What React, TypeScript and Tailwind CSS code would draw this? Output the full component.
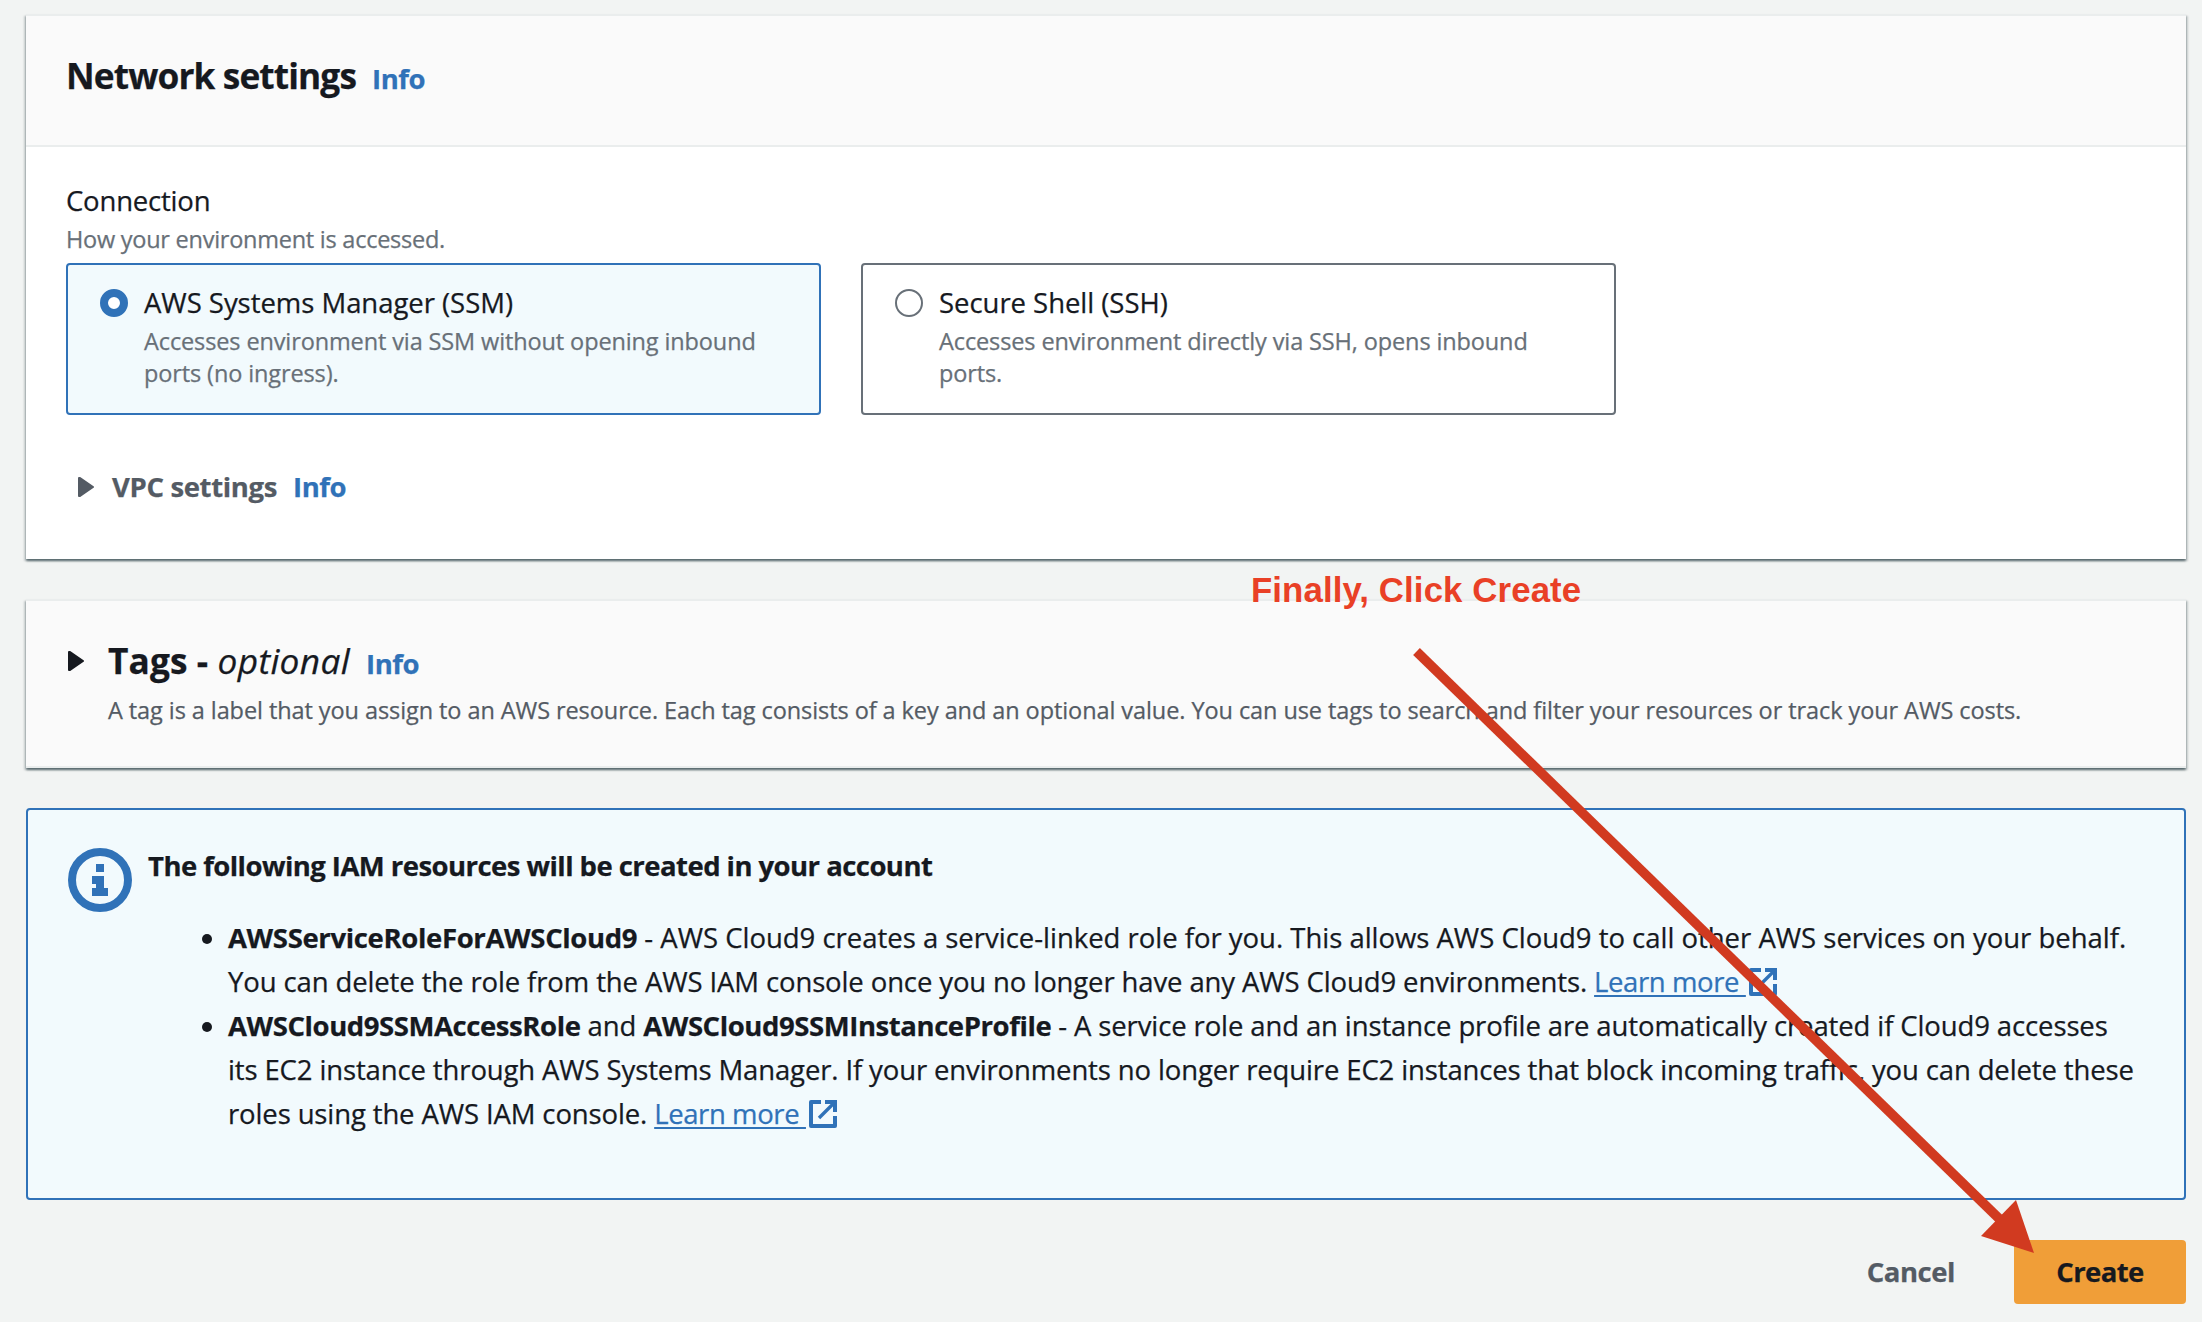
import type { ReactNode } from "react";

function Caret({ className }: { className: string }) {
  return (
    <svg viewBox="0 0 16 20" className={`h-5 w-4 shrink-0 ${className}`} fill="currentColor" stroke="currentColor" strokeWidth="2" strokeLinejoin="round">
      <path d="M1 1L2 1L15 10L2 19L1 19Z" />
    </svg>
  );
}

function InfoIcon() {
  return (
    <svg viewBox="0 0 16 16" className="h-16 w-16 shrink-0 text-[#3072b8]">
      <circle cx="8" cy="8" r="7" fill="none" stroke="currentColor" strokeWidth="2" />
      <path d="M7 4h2v2H7zM6 7h3v3h1v2H6v-2h1V9H6z" fill="currentColor" />
    </svg>
  );
}

function ExternalIcon() {
  return (
    <svg viewBox="0 0 28 28" className="ml-[3px] inline-block h-7 w-7 align-[-4px] text-[#3072b8]" fill="none" stroke="currentColor">
      <path d="M12 2H2v24h24V16" strokeWidth="4" strokeLinejoin="round" />
      <path d="M16 2h10v10" strokeWidth="4" />
      <path d="M25 3L10 18" strokeWidth="3.4" />
    </svg>
  );
}

function InfoLink({ className }: { className: string }) {
  return <a className={`text-[27.5px] font-bold tracking-[-0.45px] text-[#3072b8] ${className}`}>Info</a>;
}

function LearnMore() {
  return (
    <a className="text-[#3072b8]">
      <span className="tracking-[-0.4px] whitespace-pre underline decoration-2 underline-offset-[3px]">Learn more </span>
      <ExternalIcon />
    </a>
  );
}

const cardShadow =
  "shadow-[0_2px_2px_0_rgba(0,28,36,0.5),2px_2px_2px_0_rgba(0,28,36,0.15),-2px_2px_2px_0_rgba(0,28,36,0.15)]";

function Tile({ selected, title, children }: { selected?: boolean; title: string; children: ReactNode }) {
  return (
    <div
      className={`flex h-[152px] w-[755px] gap-4 rounded-[4px] border-2 pt-4 pl-8 ${
        selected ? "border-[#3072b8] bg-[#f2fafd]" : "border-[#687078] bg-white"
      }`}
    >
      <span
        className={`mt-2 h-7 w-7 shrink-0 rounded-full bg-white ${
          selected ? "border-8 border-[#3072b8]" : "border-2 border-[#687078]"
        }`}
      />
      <div className="whitespace-nowrap">
        <div className="text-[27.5px] leading-[44px] tracking-[-0.04px]">{title}</div>
        <div className="text-[23.5px] leading-8 tracking-[-0.12px] text-[#687078]">{children}</div>
      </div>
    </div>
  );
}

export default function App() {
  return (
    <div className="relative h-[1322px] w-[2202px] overflow-hidden bg-[#f2f4f3] pt-[14px] pr-4 pl-[26px] font-['Open_Sans','Noto_Sans',sans-serif] text-[#16191f] [-webkit-text-stroke:0.25px]">
      <section className={`h-[545px] border-t-2 border-[#eaeded] bg-white ${cardShadow}`}>
        <header className="h-[131px] border-b-2 border-[#eaeded] bg-[#fafafa] pt-[37px] pl-10">
          <div className="flex items-baseline leading-[44px]">
            <h2 className="text-[35.25px] font-bold tracking-[-0.88px]">Network settings</h2>
            <InfoLink className="ml-4" />
          </div>
        </header>
        <div className="pt-8 pl-10">
          <div className="text-[27.5px] leading-[44px] tracking-[-0.2px]">Connection</div>
          <div className="text-[23.5px] leading-8 tracking-[-0.25px] text-[#687078]">How your environment is accessed.</div>
          <div className="mt-2 flex gap-10">
            <Tile selected title="AWS Systems Manager (SSM)">
              Accesses environment via SSM without opening inbound
              <br />
              ports (no ingress).
            </Tile>
            <Tile title="Secure Shell (SSH)">
              Accesses environment directly via SSH, opens inbound
              <br />
              ports.
            </Tile>
          </div>
          <div className="mt-[50px] flex items-center pl-3 leading-[44px]">
            <Caret className="text-[#545b64]" />
            <span className="ml-[18px] text-[27.5px] font-bold tracking-[-0.35px] text-[#545b64]">VPC settings</span>
            <InfoLink className="ml-4" />
          </div>
        </div>
      </section>

      <section className={`mt-10 flex h-[169px] border-y-2 border-[#eaeded] bg-[#fafafa] pt-[37px] pl-[42px] ${cardShadow}`}>
        <Caret className="mt-[13px]" />
        <div className="ml-6">
          <div className="flex items-baseline leading-[44px]">
            <h2 className="text-[35.25px] font-bold tracking-[0.1px] whitespace-pre">Tags - </h2>
            <i className="text-[35.25px] tracking-[0.35px]">optional</i>
            <InfoLink className="ml-4" />
          </div>
          <p className="mt-2 text-[23.5px] leading-8 tracking-[-0.08px] whitespace-nowrap text-[#545b64]">
            A tag is a label that you assign to an AWS resource. Each tag consists of a key and an optional value. You can use tags to search and filter your resources or track your AWS costs.
          </p>
        </div>
      </section>

      <section className="mt-10 flex h-[392px] rounded-[4px] border-2 border-[#3072b8] bg-[#f2fafd] pl-10">
        <div className="pt-[38px]">
          <InfoIcon />
        </div>
        <div className="ml-4 pt-[34px] text-[27.5px] leading-[44px]">
          <h3 className="font-bold tracking-[-0.55px]">The following IAM resources will be created in your account</h3>
          <ul className="mt-7 whitespace-nowrap">
            <li className="flex pl-[54px]">
              <span className="mt-[18px] mr-4 h-[10px] w-[10px] shrink-0 rounded-full bg-[#16191f]" />
              <div className="h-[88px] tracking-[-0.02px]">
                <b className="font-bold tracking-[-0.35px]">AWSServiceRoleForAWSCloud9</b> - AWS Cloud9 creates a service-linked role for you. This allows AWS Cloud9 to call other AWS services on your behalf.
                <br />
                <span className="tracking-[-0.12px]">
                  You can delete the role from the AWS IAM console once you no longer have any AWS Cloud9 environments. <LearnMore />
                </span>
              </div>
            </li>
            <li className="flex pl-[54px]">
              <span className="mt-[18px] mr-4 h-[10px] w-[10px] shrink-0 rounded-full bg-[#16191f]" />
              <div className="h-[132px] tracking-[-0.13px]">
                <span className="tracking-[-0.12px]">
                  <b className="font-bold tracking-[-0.42px]">AWSCloud9SSMAccessRole</b> and <b className="font-bold tracking-[-0.42px]">AWSCloud9SSMInstanceProfile</b> - A service role and an instance profile are automatically created if Cloud9 accesses
                </span>
                <br />
                its EC2 instance through AWS Systems Manager. If your environments no longer require EC2 instances that block incoming traffic, you can delete these
                <br />
                roles using the AWS IAM console. <LearnMore />
              </div>
            </li>
          </ul>
        </div>
      </section>

      <footer className="mt-10 flex justify-end text-[27.5px] leading-[64px] font-bold">
        <button className="mr-[59px] tracking-[-0.45px] text-[#545b64]">Cancel</button>
        <button className="h-16 w-[172px] rounded-[4px] bg-[#f09e38] tracking-[-0.6px]">Create</button>
      </footer>

      <div className="absolute top-[570px] left-[1251px] font-['Liberation_Sans',sans-serif] text-[34.8px] leading-10 font-bold tracking-[0.1px] whitespace-nowrap text-[#e94026] [-webkit-text-stroke:0]">
        Finally, Click Create
      </div>
      <svg className="absolute top-0 left-0 h-[1322px] w-[2202px]" viewBox="0 0 2202 1322">
        <path d="M1416.5 651.5L2000 1219.5" stroke="#d13a20" strokeWidth="9.6" />
        <path d="M2034 1253L1981 1236L2016 1200Z" fill="#d13a20" />
      </svg>
    </div>
  );
}
